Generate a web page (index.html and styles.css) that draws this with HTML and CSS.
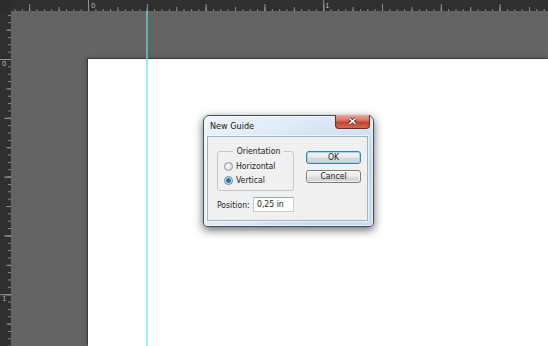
FILE: index.html
```html
<!DOCTYPE html>
<html lang="en">
<head>
    <meta charset="UTF-8">
    <title>New Guide</title>
    <link rel="stylesheet" href="styles.css">
</head>
<body>
    <div class="app">
        <div class="corner"></div>

        <div class="ruler ruler-top">
            <svg width="537" height="11" viewBox="0 0 537 11">
                <defs>
                    <pattern id="h32" x="77" width="7.35" height="11" patternUnits="userSpaceOnUse"><rect y="9" width="1" height="2" fill="#8a8a8a"/></pattern>
                    <pattern id="h8" x="77" width="29.4" height="11" patternUnits="userSpaceOnUse"><rect y="7" width="1" height="4" fill="#8a8a8a"/></pattern>
                    <pattern id="h4" x="77" width="58.8" height="11" patternUnits="userSpaceOnUse"><rect y="4" width="1" height="7" fill="#8e8e8e"/></pattern>
                    <pattern id="h1" x="77" width="235.2" height="11" patternUnits="userSpaceOnUse"><rect y="0" width="1" height="11" fill="#909090"/></pattern>
                </defs>
                <rect width="537" height="11" fill="url(#h32)"/>
                <rect width="537" height="11" fill="url(#h8)"/>
                <rect width="537" height="11" fill="url(#h4)"/>
                <rect width="537" height="11" fill="url(#h1)"/>
                <text class="ruler-num" x="80" y="8">0</text>
                <text class="ruler-num" x="314" y="8">1</text>
            </svg>
        </div>

        <div class="ruler ruler-left">
            <svg width="11" height="335" viewBox="0 0 11 335">
                <defs>
                    <pattern id="v32" y="48" width="11" height="7.35" patternUnits="userSpaceOnUse"><rect x="8" width="3" height="1" fill="#8a8a8a"/></pattern>
                    <pattern id="v8" y="48" width="11" height="29.4" patternUnits="userSpaceOnUse"><rect x="6" width="5" height="1" fill="#8a8a8a"/></pattern>
                    <pattern id="v4" y="48" width="11" height="58.8" patternUnits="userSpaceOnUse"><rect x="4" width="7" height="1" fill="#8e8e8e"/></pattern>
                    <pattern id="v1" y="48" width="11" height="235.2" patternUnits="userSpaceOnUse"><rect x="0" width="11" height="1" fill="#909090"/></pattern>
                </defs>
                <rect width="11" height="335" fill="url(#v32)"/>
                <rect width="11" height="335" fill="url(#v8)"/>
                <rect width="11" height="335" fill="url(#v4)"/>
                <rect width="11" height="335" fill="url(#v1)"/>
                <text class="ruler-num" x="2" y="55">0</text>
                <text class="ruler-num" x="2" y="290">1</text>
            </svg>
        </div>

        <div class="workspace">
            <div class="canvas"></div>
        </div>

        <div class="guide"></div>

        <div class="dialog">
            <div class="titlebar">
                <span class="title">New Guide</span>
                <div class="close">
                    <svg width="35" height="14" viewBox="0 0 35 14">
                        <path d="M14.5 4.5 L20.5 9.8 M20.5 4.5 L14.5 9.8" stroke="#4a2420" stroke-width="3.2" fill="none"/>
                        <path d="M14.5 4.5 L20.5 9.8 M20.5 4.5 L14.5 9.8" stroke="#ffffff" stroke-width="1.6" fill="none"/>
                    </svg>
                </div>
            </div>
            <div class="client">
                <div class="left-col">
                    <fieldset class="group">
                        <legend>Orientation</legend>
                        <div class="radio"><span class="radio-dot"></span>Horizontal</div>
                        <div class="radio"><span class="radio-dot checked"></span>Vertical</div>
                    </fieldset>
                    <div class="position-row">
                        <span>Position:</span>
                        <div class="field">0,25 in</div>
                    </div>
                </div>
                <div class="buttons">
                    <div class="btn btn-default">OK</div>
                    <div class="btn">Cancel</div>
                </div>
            </div>
        </div>
    </div>
</body>
</html>
```

FILE: styles.css
```css
body {
    margin: 0;
    background: #646464;
    overflow: hidden;
}

.app {
    position: relative;
    width: 548px;
    height: 346px;
    display: grid;
    grid-template-columns: 11px 1fr;
    grid-template-rows: 11px 1fr;
    overflow: hidden;
    background: #646464;
}

/* rulers */
.corner {
    background: #2c2c2c;
}

.ruler {
    background: #2f2f2f;
    overflow: hidden;
}

.ruler svg {
    display: block;
}

.ruler-num {
    font-family: "DejaVu Sans", sans-serif;
    font-size: 7px;
    fill: #b4b4b4;
}

/* work area */
.workspace {
    padding: 48px 0 0 77px;
    overflow: hidden;
}

.canvas {
    height: 100%;
    background: #ffffff;
    box-shadow: -1px -1px 0 #3a3a3a, 0 0 6px rgba(0,0,0,0.3);
}

.guide {
    position: absolute;
    left: 146px;
    top: 11px;
    bottom: 0;
    width: 2px;
    background: rgba(85,230,230,0.62);
}

/* dialog */
.dialog {
    position: absolute;
    left: 203px;
    top: 115px;
    width: 171px;
    height: 112px;
    box-sizing: border-box;
    padding: 0 5px 5px 3px;
    border: 1px solid #3e4e60;
    border-radius: 6px 6px 4px 4px;
    background:
        linear-gradient(100deg, rgba(255,255,255,0.55), rgba(255,255,255,0) 70%),
        linear-gradient(#dce9f6, #c4d9ee 40%, #c9dcf0);
    box-shadow: inset 0 0 0 1px rgba(255,255,255,0.6), 0 3px 10px rgba(0,0,0,0.6);
    font-family: "DejaVu Sans Condensed", "DejaVu Sans", sans-serif;
    font-size: 8.6px;
    color: #1a1a1a;
}

.titlebar {
    height: 20px;
    display: flex;
    align-items: center;
    justify-content: space-between;
}

.title {
    padding-left: 3px;
    font-size: 9px;
    color: #111;
}

.close {
    align-self: flex-start;
    margin: -1px -2px 0 0;
    width: 35px;
    height: 14px;
    box-sizing: border-box;
    border: 1px solid #6e2a22;
    border-top: none;
    border-radius: 0 0 4px 4px;
    background: linear-gradient(#e8a898, #d47060 45%, #c2402e 55%, #d06a50);
}

.close svg {
    display: block;
    margin: -1px 0 0 -1px;
}

.client {
    width: 161px;
    height: 85px;
    box-sizing: border-box;
    padding: 14px 6px 0 9px;
    border: 1px solid #9fb3c8;
    box-shadow: 0 0 0 1px rgba(255,255,255,0.6);
    background: #f0f0f0;
    display: flex;
    gap: 12px;
}

.left-col {
    width: 77px;
    margin-top: -5px;
}

.group {
    margin: 0;
    padding: 2px 0 3px 6px;
    border: 1px solid #c2c6ca;
    border-radius: 3px;
}

.group legend {
    margin: 0 auto;
    padding: 0 4px;
    line-height: 11px;
}

.radio {
    height: 14px;
    display: flex;
    align-items: center;
}

.radio-dot {
    width: 9px;
    height: 9px;
    box-sizing: border-box;
    margin-right: 3px;
    border: 1px solid #8c8f94;
    border-radius: 50%;
    background: radial-gradient(circle at 40% 40%, #f8f8f8, #dadada);
}

.radio-dot.checked {
    border-color: #5b86a8;
    background: radial-gradient(circle, #174f70 0, #2c87b0 2px, #bfe0ee 3px, #eef6fa 4px);
}

.position-row {
    margin-top: 6px;
    display: flex;
    align-items: center;
    justify-content: space-between;
}

.field {
    width: 41px;
    height: 15px;
    box-sizing: border-box;
    padding-left: 3px;
    border: 1px solid #c6ccd4;
    border-top-color: #a3a8b0;
    background: #ffffff;
    line-height: 13px;
}

.buttons {
    width: 55px;
    display: flex;
    flex-direction: column;
    gap: 6px;
}

.btn {
    height: 13px;
    box-sizing: border-box;
    border: 1px solid #7c7c7c;
    border-radius: 3px;
    background: linear-gradient(#f4f4f4, #ebebeb 48%, #dcdcdc 52%, #d0d0d0);
    box-shadow: inset 0 0 0 1px rgba(255,255,255,0.7);
    text-align: center;
    line-height: 11px;
}

.btn-default {
    border-color: #3a7fae;
    box-shadow: inset 0 0 0 1px #9fd7f0;
}
```
